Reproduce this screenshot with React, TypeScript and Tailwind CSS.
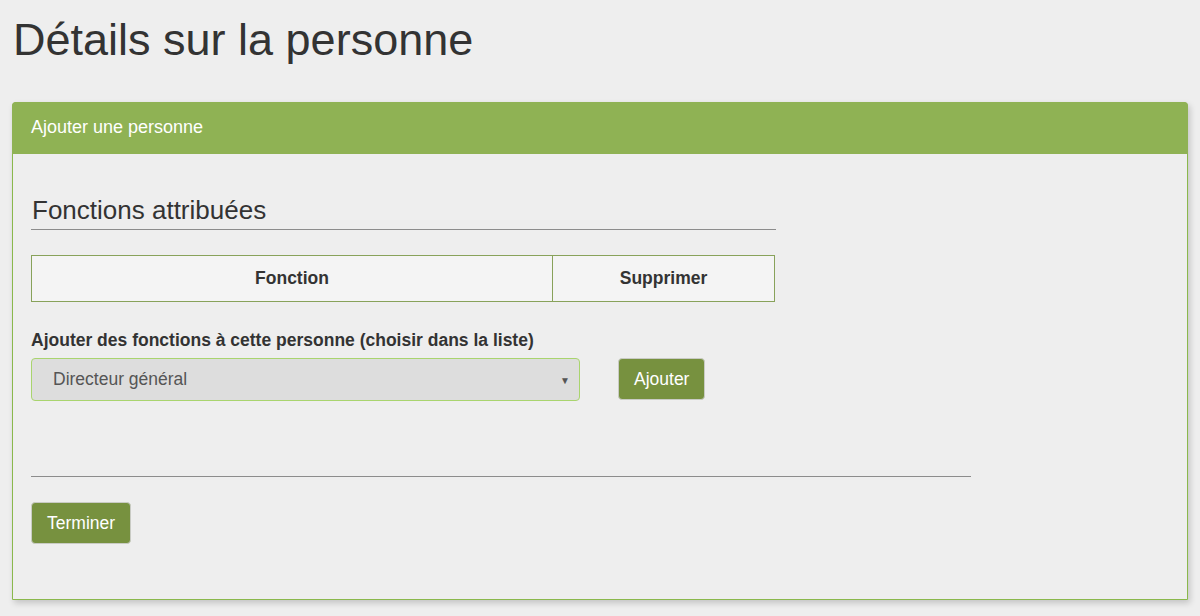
const font = { fontFamily: '"Liberation Sans", Arial, sans-serif' };

const Button = ({ label }: { label: string }) => (
  <button
    type="button"
    className="h-[42px] px-[15px] rounded-[4px] border border-[#c9cbc4] bg-[#77913f] text-white text-[17.5px] leading-[20px]"
  >
    {label}
  </button>
);

export default function App() {
  return (
    <div className="min-h-[616px] bg-[#eeeeee] px-3 pt-[15px] text-[#333333]" style={font}>
      <h1 className="text-[45px] leading-[1.1] font-normal pl-[1px]">Détails sur la personne</h1>

      <div className="mt-[37px] rounded-t-[4px] border border-[#8ab84c] bg-[#eeeeee] shadow-[2px_3px_6px_rgba(0,0,0,0.18)]">
        <div className="h-[52px] -mx-px -mt-px rounded-t-[4px] bg-[#8fb254] flex items-center px-[19px] text-white text-[18px]">
          Ajouter une personne
        </div>

        <div className="px-[18px] pt-[42px] pb-[55px]">
          <h2 className="w-[745px] border-b border-[#8c8c8c] pb-[5px] pl-[1px] text-[26px] leading-[1.1] font-normal">
            Fonctions attribuées
          </h2>

          <table className="mt-[25px] w-[744px] border-collapse bg-[#f4f4f4] text-[17.5px] font-bold">
            <thead>
              <tr className="h-[46px]">
                <th className="w-[521px] border border-[#88a25a] font-bold">Fonction</th>
                <th className="border border-[#88a25a] font-bold">Supprimer</th>
              </tr>
            </thead>
          </table>

          <div className="mt-[27px] text-[17.5px] leading-[22px] font-bold">
            Ajouter des fonctions à cette personne (choisir dans la liste)
          </div>

          <div className="mt-[7px] flex items-start gap-[38px]">
            <div className="relative w-[549px] h-[43px] rounded-[4px] border border-[#a9d46e] bg-[#dddddd] flex items-center pl-[21px] text-[17.5px] text-[#555555]">
              Directeur général
              <span className="absolute right-[9px] top-[14px] text-[10px] text-[#555555]">▼</span>
            </div>
            <Button label="Ajouter" />
          </div>

          <div className="mt-[75px] w-[940px] border-t border-[#8c8c8c]" />

          <div className="mt-[25px]">
            <Button label="Terminer" />
          </div>
        </div>
      </div>
    </div>
  );
}
